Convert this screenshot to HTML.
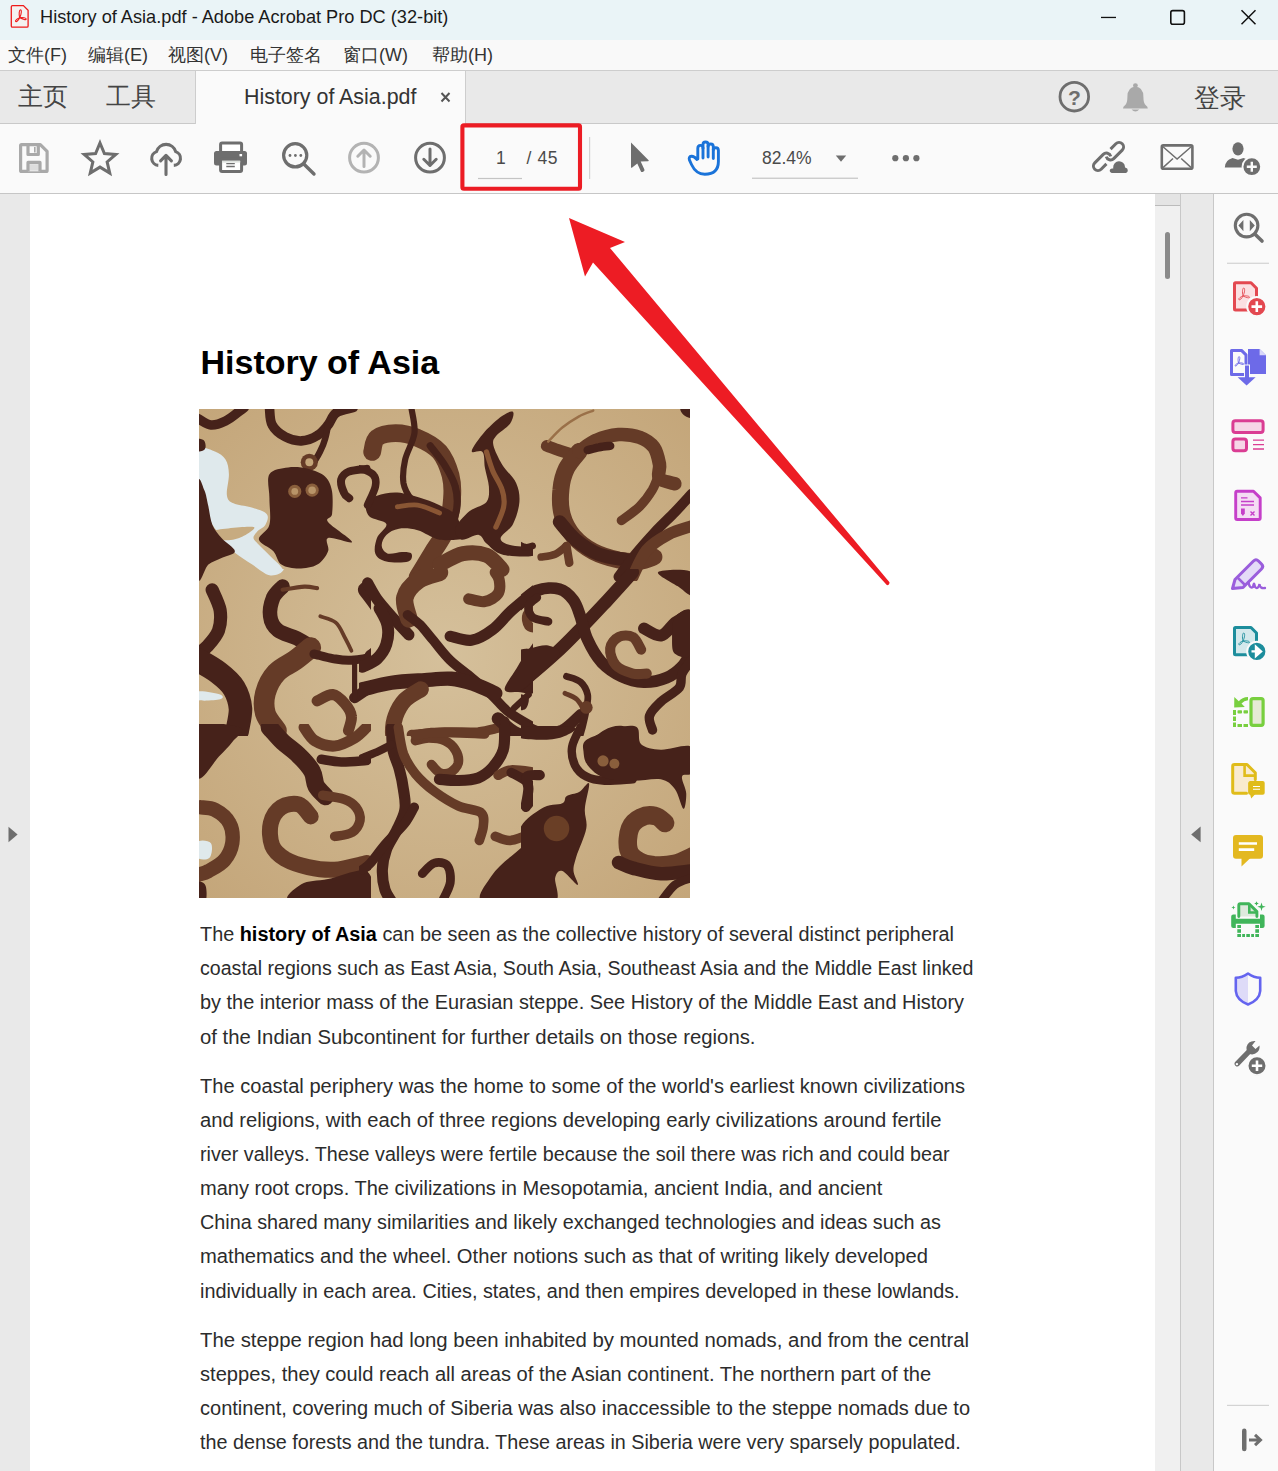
<!DOCTYPE html>
<html><head><meta charset="utf-8">
<style>
*{margin:0;padding:0;box-sizing:border-box}
html,body{width:1278px;height:1471px;overflow:hidden;background:#fff;font-family:"Liberation Sans",sans-serif}
.abs{position:absolute}
#title{left:0;top:0;width:1278px;height:40px;background:#eaf4f7}
#menu{left:0;top:40px;width:1278px;height:31px;background:#f9f9f9;border-bottom:1px solid #cdcdcd}
#tabs{left:0;top:71px;width:1278px;height:53px;background:#e9e9e9;border-bottom:1px solid #c9c9c9}
#tool{left:0;top:124px;width:1278px;height:70px;background:#fafafa;border-bottom:1px solid #c6c6c6}
#doc{left:0;top:194px;width:1278px;height:1277px;background:#e9e9e9}
.t{position:absolute;white-space:nowrap;line-height:1}
.pl{position:absolute;left:200px;white-space:nowrap;line-height:1;font-size:20px;color:#2c2c2c;transform-origin:0 0}
.pl b{font-weight:bold;color:#000}
svg.ov{position:absolute;left:0;top:0}
</style></head><body>
<div id="title" class="abs">
  <div class="t" style="left:40px;top:8.3px;font-size:18.2px;color:#1a1a1a">History of Asia.pdf - Adobe Acrobat Pro DC (32-bit)</div>
</div>
<div id="menu" class="abs">
  <div class="t" style="left:8px;top:5.5px;font-size:18px;color:#333">文件(F)</div>
  <div class="t" style="left:88px;top:5.5px;font-size:18px;color:#333">编辑(E)</div>
  <div class="t" style="left:168px;top:5.5px;font-size:18px;color:#333">视图(V)</div>
  <div class="t" style="left:250px;top:5.5px;font-size:18px;color:#333">电子签名</div>
  <div class="t" style="left:343px;top:5.5px;font-size:18px;color:#333">窗口(W)</div>
  <div class="t" style="left:432px;top:5.5px;font-size:18px;color:#333">帮助(H)</div>
</div>
<div id="tabs" class="abs">
  <div class="t" style="left:18px;top:13px;font-size:25px;color:#444">主页</div>
  <div class="t" style="left:106px;top:13px;font-size:25px;color:#444">工具</div>
  <div class="abs" style="left:195px;top:-1px;width:271px;height:54px;background:#fafafa;border-left:1px solid #cdcdcd;border-right:1px solid #cdcdcd;border-top:1px solid #cdcdcd"></div>
  <div class="t" style="left:244px;top:15.8px;font-size:21.4px;color:#333">History of Asia.pdf</div>
  <div class="t" style="left:1194px;top:14px;font-size:26px;color:#444">登录</div>
</div>
<div id="tool" class="abs">
  <div class="t" style="left:496px;top:26.2px;font-size:17.5px;color:#4a4a4a">1</div>
  <div class="t" style="left:526.5px;top:26.2px;font-size:17.5px;color:#4a4a4a;letter-spacing:0.6px">/ 45</div>
  <div class="t" style="left:762px;top:25.9px;font-size:17.5px;color:#4a4a4a">82.4%</div>
</div>
<div id="doc" class="abs">
  <div class="abs" style="left:30px;top:0;width:1125px;height:1277px;background:#fff"></div>
  <div class="abs" style="left:1155px;top:0;width:26px;height:1277px;background:#f0f0f0;border-right:1px solid #c8c8c8"></div>
  <div class="abs" style="left:1155px;top:0;width:25px;height:12px;background:#e4e4e4;border-bottom:1px solid #bbb"></div>
  <div class="abs" style="left:1165px;top:38px;width:5px;height:47px;background:#8a8a8a;border-radius:3px"></div>
  <div class="abs" style="left:1181px;top:0;width:33px;height:1277px;background:#e9e9e9;border-right:1px solid #c8c8c8"></div>
  <div class="abs" style="left:1214px;top:0;width:64px;height:1277px;background:#fafafa"></div>
</div>
<div class="t" style="left:200.5px;top:344.8px;font-size:34px;font-weight:bold;color:#000">History of Asia</div>

<svg class="abs" style="left:190px;top:400px" width="510" height="510" viewBox="0 0 2556 2556">
<defs><clipPath id="c0"><rect x="15" y="15" width="892" height="892"/></clipPath><clipPath id="c1"><rect x="847" y="15" width="872" height="892"/></clipPath><clipPath id="c2"><rect x="1659" y="15" width="877" height="892"/></clipPath><clipPath id="c3"><rect x="15" y="847" width="892" height="837"/></clipPath><clipPath id="c4"><rect x="847" y="847" width="872" height="837"/></clipPath><clipPath id="c5"><rect x="1659" y="847" width="877" height="837"/></clipPath><clipPath id="c6"><rect x="15" y="1624" width="892" height="902"/></clipPath><clipPath id="c7"><rect x="847" y="1624" width="872" height="902"/></clipPath><clipPath id="c8"><rect x="1659" y="1624" width="877" height="902"/></clipPath><clipPath id="imc"><rect x="45" y="45" width="2461" height="2451"/></clipPath>
<radialGradient id="bgg" cx="0.5" cy="0.5" r="0.7"><stop offset="0" stop-color="#d5c09b"/><stop offset="1" stop-color="#c4a67a"/></radialGradient></defs>
<g clip-path="url(#imc)">
<rect x="45" y="45" width="2461" height="2451" fill="url(#bgg)"/>
<g clip-path="url(#c0)"><path d="M45 252 C58 224 103 251 125 258 C147 266 167 280 178 298 C190 317 194 342 195 372 C196 402 181 454 185 478 C189 503 198 508 218 518 C238 528 277 530 305 538 C333 547 373 557 385 572 C397 586 386 611 378 625 C371 640 348 647 338 658 C328 670 317 681 318 692 C320 703 332 711 345 725 C358 740 378 757 398 778 C418 800 465 835 465 852 C465 868 424 883 398 878 C373 874 341 844 312 825 C283 806 251 784 225 765 C200 746 173 728 158 712 C144 695 147 682 138 665 C130 648 114 634 105 612 C96 590 92 558 85 532 C78 505 72 470 65 452 C58 434 48 458 45 425 C42 392 32 280 45 252Z" fill="#dfe9ec"/><path d="M118 655 C145 645 283 633 312 635 C341 637 306 658 292 668 C277 679 248 693 225 698 C202 703 170 706 152 698 C134 691 92 666 118 655Z" fill="#c7ab80"/><path d="M38 92 C50 97 82 123 105 125 C128 127 155 116 178 105 C202 94 230 70 245 58 C261 47 267 42 272 38" fill="none" stroke="#46221a" stroke-width="48" stroke-linecap="round" stroke-linejoin="round"/><path d="M398 38 C401 53 398 101 412 125 C425 150 454 172 478 185 C503 198 532 206 558 205 C585 204 616 192 638 178 C661 165 676 144 692 125 C707 106 711 80 732 65 C753 51 804 43 818 38" fill="none" stroke="#46221a" stroke-width="48" stroke-linecap="round" stroke-linejoin="round"/><path d="M692 125 C690 136 685 170 678 192 C672 214 661 240 652 258 C643 277 630 297 625 305" fill="none" stroke="#46221a" stroke-width="32" stroke-linecap="round" stroke-linejoin="round"/><circle cx="598" cy="312" r="43" fill="#653b27"/><circle cx="598" cy="312" r="20" fill="#c4a67a"/><path d="M398 372 C414 346 460 343 492 338 C524 334 561 337 592 345 C623 353 658 366 678 385 C698 404 706 427 712 458 C717 490 715 546 712 572 C708 597 675 588 692 612 C708 635 812 698 812 712 C812 725 712 684 692 692 C672 700 701 736 692 758 C683 781 663 811 638 825 C614 840 575 845 545 845 C515 845 480 840 458 825 C437 811 437 780 418 758 C400 737 348 721 345 698 C342 676 390 660 398 625 C407 591 398 534 398 492 C398 450 383 397 398 372Z" fill="#46221a"/><circle cx="525" cy="458" r="33" fill="#8a5f3c"/><circle cx="612" cy="452" r="33" fill="#8a5f3c"/><circle cx="525" cy="458" r="17" fill="#b89468"/><circle cx="612" cy="452" r="19" fill="#b89468"/><path d="M38 425 C44 353 63 434 72 452 C81 470 85 503 92 532 C98 561 101 598 112 625 C123 652 140 670 158 692 C177 714 225 742 225 758 C225 775 181 781 158 792 C136 803 112 810 92 825 C72 841 47 952 38 885 C30 818 33 497 38 425Z" fill="#46221a"/><path d="M38 198 C44 190 66 197 72 205 C78 213 81 237 75 245 C70 253 45 263 38 255 C32 247 33 207 38 198Z" fill="#46221a"/><path d="M885 345 C871 347 820 350 798 358 C777 367 763 381 758 398 C754 416 765 450 772 465 C778 481 794 487 798 492" fill="none" stroke="#46221a" stroke-width="40" stroke-linecap="round" stroke-linejoin="round"/></g>
<g clip-path="url(#c1)"><path d="M913 260 C917 249 917 205 937 190 C957 174 997 166 1031 166 C1065 166 1104 174 1141 190 C1178 205 1223 229 1251 260 C1278 292 1295 339 1306 378 C1316 417 1317 450 1313 496 C1310 541 1299 607 1282 653 C1265 698 1235 731 1212 770 C1188 809 1153 868 1141 888" fill="none" stroke="#653b27" stroke-width="89" stroke-linecap="round" stroke-linejoin="round"/><path d="M1204 229 C1215 245 1253 289 1274 323 C1295 357 1319 396 1329 433 C1340 470 1342 504 1337 543 C1332 582 1304 647 1298 668" fill="none" stroke="#46221a" stroke-width="36" stroke-linecap="round" stroke-linejoin="round"/><path d="M1110 41 C1112 62 1130 123 1125 166 C1120 209 1087 258 1078 300 C1069 341 1065 385 1070 417 C1076 450 1093 476 1110 496 C1127 515 1162 528 1172 535" fill="none" stroke="#46221a" stroke-width="31" stroke-linecap="round" stroke-linejoin="round"/><path d="M882 511 C889 494 911 488 937 480 C963 472 1000 462 1039 464 C1078 467 1134 484 1172 496 C1210 507 1240 522 1266 535 C1293 548 1312 554 1329 574 C1346 594 1359 633 1368 653 C1378 672 1404 684 1384 692 C1364 700 1291 706 1251 700 C1210 693 1175 662 1141 653 C1107 643 1073 641 1047 645 C1021 649 998 662 984 676 C970 690 959 715 961 731 C962 747 975 765 992 770 C1009 775 1043 762 1062 762 C1082 762 1104 762 1110 770 C1115 778 1115 803 1094 809 C1073 816 1011 816 984 809 C957 803 937 790 929 770 C921 751 928 717 937 692 C946 667 991 639 984 621 C978 603 915 600 898 582 C881 564 876 528 882 511Z" fill="#46221a"/><path d="M890 527 C896 511 924 458 929 433 C934 408 933 392 921 378 C910 364 879 351 859 347 C838 343 812 344 796 354 C779 365 763 391 761 409 C758 428 777 455 780 464" fill="none" stroke="#46221a" stroke-width="38" stroke-linecap="round" stroke-linejoin="round"/><path d="M1412 256 C1413 239 1453 188 1478 158 C1504 129 1541 96 1564 80 C1588 64 1613 54 1619 60 C1626 67 1618 99 1604 119 C1589 139 1547 164 1533 182 C1519 200 1516 205 1521 229 C1527 253 1546 292 1564 323 C1583 354 1621 386 1635 417 C1649 449 1653 477 1651 511 C1648 545 1635 591 1619 621 C1604 651 1559 674 1557 692 C1554 709 1578 719 1604 727 C1630 736 1695 734 1713 743 C1732 752 1738 777 1713 782 C1689 787 1602 785 1564 774 C1527 764 1506 736 1486 719 C1466 703 1468 679 1447 676 C1426 673 1380 705 1361 700 C1341 694 1323 668 1329 645 C1336 621 1374 581 1400 558 C1426 536 1470 532 1486 511 C1502 490 1499 462 1498 433 C1496 404 1483 368 1478 339 C1473 310 1478 274 1466 260 C1455 247 1410 273 1412 256Z" fill="#46221a"/><path d="M1486 260 C1491 276 1504 323 1517 354 C1530 386 1555 419 1564 449 C1574 479 1578 504 1572 535 C1567 566 1540 620 1533 637" fill="none" stroke="#8a5634" stroke-width="26" stroke-linecap="round" stroke-linejoin="round"/><path d="M1039 535 C1056 534 1106 522 1141 527 C1176 532 1232 560 1251 566" fill="none" stroke="#8a5634" stroke-width="24" stroke-linecap="round" stroke-linejoin="round"/><path d="M686 127 C696 120 729 101 749 88 C768 75 794 55 804 49" fill="none" stroke="#46221a" stroke-width="52" stroke-linecap="round" stroke-linejoin="round"/><path d="M686 394 C694 354 723 398 733 417 C744 437 749 483 749 511 C749 540 724 557 733 590 C742 622 811 697 804 707 C796 718 706 705 686 653 C666 600 678 433 686 394Z" fill="#46221a"/><path d="M1251 825 C1270 816 1329 778 1368 770 C1408 762 1453 765 1486 778 C1519 791 1551 837 1564 849" fill="none" stroke="#653b27" stroke-width="75" stroke-linecap="round" stroke-linejoin="round"/></g>
<g clip-path="url(#c2)"><path d="M1788 230 C1801 234 1841 250 1866 258 C1890 266 1925 276 1936 279" fill="none" stroke="#653b27" stroke-width="59" stroke-linecap="round" stroke-linejoin="round"/><path d="M1950 258 C1940 272 1902 311 1887 343 C1872 374 1862 410 1859 449 C1855 487 1855 537 1866 576 C1876 614 1896 651 1922 682 C1948 712 1983 739 2021 759 C2059 779 2109 793 2148 802 C2187 810 2225 811 2254 809 C2283 806 2313 791 2325 787" fill="none" stroke="#653b27" stroke-width="85" stroke-linecap="round" stroke-linejoin="round"/><path d="M1852 611 C1866 626 1903 676 1936 703 C1969 730 2007 757 2049 773 C2092 790 2167 797 2190 802" fill="none" stroke="#46221a" stroke-width="68" stroke-linecap="round" stroke-linejoin="round"/><path d="M1950 258 C1965 249 2002 216 2035 202 C2068 187 2112 176 2148 173 C2185 171 2225 177 2254 187 C2283 198 2308 214 2325 237 C2341 259 2348 296 2353 322 C2358 347 2340 376 2353 392 C2366 409 2418 416 2430 420" fill="none" stroke="#653b27" stroke-width="68" stroke-linecap="round" stroke-linejoin="round"/><path d="M2353 364 C2347 378 2334 420 2318 449 C2301 477 2280 507 2254 533 C2228 559 2178 592 2162 604" fill="none" stroke="#653b27" stroke-width="47" stroke-linecap="round" stroke-linejoin="round"/><path d="M1993 251 C2002 249 2030 240 2049 237 C2068 233 2096 231 2106 230" fill="none" stroke="#46221a" stroke-width="42" stroke-linecap="round" stroke-linejoin="round"/><path d="M1760 787 C1772 785 1809 783 1830 773 C1852 764 1877 738 1887 731" fill="none" stroke="#653b27" stroke-width="38" stroke-linecap="round" stroke-linejoin="round"/><path d="M1887 731 C1889 745 1899 802 1901 816" fill="none" stroke="#653b27" stroke-width="42" stroke-linecap="round" stroke-linejoin="round"/><path d="M2515 470 C2501 485 2461 530 2430 562 C2400 593 2365 625 2332 660 C2299 696 2263 736 2233 773 C2202 811 2162 867 2148 886" fill="none" stroke="#46221a" stroke-width="51" stroke-linecap="round" stroke-linejoin="round"/><path d="M2515 632 C2495 639 2433 655 2395 675 C2358 695 2319 717 2289 752 C2260 787 2230 864 2219 886" fill="none" stroke="#653b27" stroke-width="59" stroke-linecap="round" stroke-linejoin="round"/><path d="M2459 39 C2466 33 2506 31 2515 39 C2525 47 2522 83 2515 89 C2508 94 2482 83 2473 74 C2463 66 2452 45 2459 39Z" fill="#46221a"/><path d="M1647 724 C1653 726 1670 737 1682 738 C1694 739 1712 732 1717 731" fill="none" stroke="#46221a" stroke-width="34" stroke-linecap="round" stroke-linejoin="round"/><path d="M1795 209 C1807 197 1840 159 1866 138 C1892 117 1925 96 1950 82 C1976 67 2009 58 2021 53" fill="none" stroke="#9a7048" stroke-width="12" stroke-linecap="round" stroke-linejoin="round"/></g>
<g clip-path="url(#c3)"><path d="M111 951 C118 968 145 1019 151 1053 C156 1087 153 1125 143 1155 C132 1185 105 1214 88 1233 C71 1253 49 1266 41 1273" fill="none" stroke="#46221a" stroke-width="66" stroke-linecap="round" stroke-linejoin="round"/><path d="M41 1304 C58 1314 113 1343 143 1367 C173 1390 203 1415 221 1445 C239 1475 250 1512 253 1547 C255 1582 239 1639 237 1657" fill="none" stroke="#46221a" stroke-width="118" stroke-linecap="round" stroke-linejoin="round"/><path d="M464 935 C456 944 428 965 417 990 C407 1015 398 1057 402 1084 C405 1112 419 1137 441 1155 C463 1173 506 1180 535 1194 C564 1208 600 1233 613 1241" fill="none" stroke="#46221a" stroke-width="73" stroke-linecap="round" stroke-linejoin="round"/><path d="M605 1241 C592 1252 556 1283 527 1304 C498 1325 458 1339 433 1367 C408 1394 387 1435 378 1469 C369 1503 369 1539 378 1571 C387 1602 424 1642 433 1657" fill="none" stroke="#653b27" stroke-width="104" stroke-linecap="round" stroke-linejoin="round"/><path d="M621 1273 C637 1276 684 1291 715 1296 C747 1301 774 1307 809 1304 C845 1301 897 1293 927 1280 C957 1267 979 1235 990 1225" fill="none" stroke="#46221a" stroke-width="45" stroke-linecap="round" stroke-linejoin="round"/><path d="M880 951 C890 965 924 1007 943 1037 C961 1067 983 1100 990 1131 C996 1163 995 1199 982 1225 C969 1252 923 1278 911 1288" fill="none" stroke="#46221a" stroke-width="77" stroke-linecap="round" stroke-linejoin="round"/><path d="M637 1508 C650 1503 692 1474 715 1476 C739 1479 762 1505 778 1524 C794 1542 807 1564 809 1586 C812 1608 796 1645 794 1657" fill="none" stroke="#653b27" stroke-width="55" stroke-linecap="round" stroke-linejoin="round"/><path d="M825 1492 C842 1482 892 1444 927 1429 C962 1415 1019 1410 1037 1406" fill="none" stroke="#46221a" stroke-width="55" stroke-linecap="round" stroke-linejoin="round"/><path d="M825 1312 C825 1342 825 1462 825 1492" fill="none" stroke="#46221a" stroke-width="26" stroke-linecap="round" stroke-linejoin="round"/><path d="M464 951 C483 948 545 937 574 935 C603 934 626 942 637 943" fill="none" stroke="#653b27" stroke-width="21" stroke-linecap="round" stroke-linejoin="round"/><path d="M653 1084 C666 1090 710 1097 731 1116 C752 1134 765 1171 778 1194 C791 1218 804 1246 809 1257" fill="none" stroke="#653b27" stroke-width="19" stroke-linecap="round" stroke-linejoin="round"/><path d="M323 786 C336 773 441 774 464 786 C488 798 477 844 464 857 C451 870 409 876 386 865 C362 853 310 799 323 786Z" fill="#dfe9ec"/><path d="M41 1461 C59 1456 132 1470 151 1476 C169 1483 169 1495 151 1500 C132 1505 59 1510 41 1504 C22 1497 22 1465 41 1461Z" fill="#dfe9ec"/><path d="M9 833 C20 831 56 825 72 818 C88 810 98 791 103 786" fill="none" stroke="#46221a" stroke-width="56" stroke-linecap="round" stroke-linejoin="round"/></g>
<g clip-path="url(#c4)"><path d="M890 917 C898 930 917 969 937 997 C957 1025 984 1054 1010 1084 C1037 1114 1083 1162 1097 1177" fill="none" stroke="#46221a" stroke-width="56" stroke-linecap="round" stroke-linejoin="round"/><path d="M950 1044 C957 1058 985 1100 990 1130 C996 1160 993 1196 984 1224 C975 1252 957 1278 937 1297 C917 1316 876 1330 864 1337" fill="none" stroke="#46221a" stroke-width="60" stroke-linecap="round" stroke-linejoin="round"/><path d="M1250 864 C1233 870 1173 883 1144 904 C1115 925 1085 958 1077 990 C1069 1023 1094 1079 1097 1097" fill="none" stroke="#653b27" stroke-width="88" stroke-linecap="round" stroke-linejoin="round"/><path d="M1090 1077 C1102 1086 1135 1108 1157 1130 C1179 1153 1199 1182 1224 1210 C1248 1239 1273 1274 1304 1304 C1335 1334 1376 1362 1410 1390 C1445 1419 1479 1448 1510 1477 C1542 1506 1559 1535 1597 1564 C1635 1593 1714 1636 1737 1650" fill="none" stroke="#46221a" stroke-width="48" stroke-linecap="round" stroke-linejoin="round"/><path d="M1397 997 C1410 999 1453 1015 1477 1010 C1502 1006 1532 988 1544 970 C1556 953 1553 922 1550 904 C1548 886 1534 870 1530 864" fill="none" stroke="#653b27" stroke-width="56" stroke-linecap="round" stroke-linejoin="round"/><path d="M1304 1184 C1322 1187 1375 1209 1410 1204 C1446 1198 1484 1175 1517 1150 C1550 1126 1574 1090 1610 1057 C1647 1024 1716 968 1737 950" fill="none" stroke="#46221a" stroke-width="56" stroke-linecap="round" stroke-linejoin="round"/><path d="M1737 1030 C1729 1038 1697 1060 1690 1077 C1684 1094 1689 1119 1697 1130 C1705 1142 1730 1142 1737 1144" fill="none" stroke="#653b27" stroke-width="48" stroke-linecap="round" stroke-linejoin="round"/><path d="M1577 1450 C1576 1430 1617 1377 1637 1344 C1657 1310 1680 1270 1697 1250 C1714 1230 1730 1190 1737 1224 C1744 1257 1753 1410 1737 1450 C1722 1490 1670 1464 1644 1464 C1617 1464 1578 1470 1577 1450Z" fill="#46221a"/><path d="M864 1450 C888 1445 958 1425 1010 1417 C1063 1409 1127 1407 1177 1404 C1227 1400 1269 1394 1310 1397 C1352 1400 1387 1412 1424 1424 C1460 1436 1513 1463 1530 1470" fill="none" stroke="#46221a" stroke-width="72" stroke-linecap="round" stroke-linejoin="round"/><path d="M1157 1450 C1144 1459 1098 1482 1077 1504 C1056 1526 1040 1557 1030 1584 C1020 1610 1017 1638 1017 1664 C1017 1689 1028 1725 1030 1737" fill="none" stroke="#653b27" stroke-width="80" stroke-linecap="round" stroke-linejoin="round"/><path d="M1110 1677 C1138 1675 1222 1666 1277 1664 C1333 1662 1399 1667 1444 1664 C1488 1660 1527 1647 1544 1644" fill="none" stroke="#653b27" stroke-width="48" stroke-linecap="round" stroke-linejoin="round"/><path d="M1544 1597 C1557 1608 1592 1646 1624 1664 C1656 1682 1718 1697 1737 1704" fill="none" stroke="#46221a" stroke-width="64" stroke-linecap="round" stroke-linejoin="round"/><path d="M1624 1544 C1636 1533 1685 1488 1697 1477" fill="none" stroke="#46221a" stroke-width="32" stroke-linecap="round" stroke-linejoin="round"/><path d="M1577 1610 C1579 1632 1588 1716 1590 1737" fill="none" stroke="#46221a" stroke-width="48" stroke-linecap="round" stroke-linejoin="round"/></g>
<g clip-path="url(#c5)"><path d="M2219 863 C2198 887 2133 959 2092 1004 C2050 1049 2015 1087 1972 1131 C1928 1176 1886 1222 1830 1272 C1775 1323 1672 1408 1640 1435" fill="none" stroke="#46221a" stroke-width="64" stroke-linecap="round" stroke-linejoin="round"/><path d="M1640 1032 C1656 1019 1703 969 1739 955 C1774 941 1821 939 1852 948 C1882 956 1905 981 1922 1004 C1940 1028 1946 1056 1958 1089 C1969 1122 1975 1164 1993 1202 C2010 1239 2035 1284 2063 1315 C2092 1345 2127 1369 2162 1385 C2198 1402 2238 1412 2275 1414 C2313 1415 2356 1405 2388 1392 C2420 1379 2445 1358 2466 1336 C2487 1314 2507 1271 2515 1258" fill="none" stroke="#46221a" stroke-width="59" stroke-linecap="round" stroke-linejoin="round"/><path d="M1795 1110 C1782 1107 1734 1102 1717 1089 C1701 1076 1693 1049 1696 1032 C1700 1016 1732 997 1739 990" fill="none" stroke="#46221a" stroke-width="42" stroke-linecap="round" stroke-linejoin="round"/><path d="M1640 1272 C1652 1237 1685 1251 1710 1244 C1736 1237 1772 1225 1795 1230 C1819 1235 1857 1249 1852 1272 C1846 1296 1795 1341 1760 1371 C1725 1402 1660 1472 1640 1456 C1620 1439 1628 1308 1640 1272Z" fill="#46221a"/><path d="M2275 1145 C2289 1151 2334 1185 2360 1181 C2386 1176 2409 1134 2430 1117 C2452 1101 2478 1088 2487 1082" fill="none" stroke="#46221a" stroke-width="59" stroke-linecap="round" stroke-linejoin="round"/><path d="M2430 1089 C2447 1067 2501 1030 2515 1061 C2529 1091 2529 1237 2515 1272 C2501 1308 2447 1285 2430 1272 C2414 1259 2416 1225 2416 1195 C2416 1164 2414 1111 2430 1089Z" fill="#46221a"/><path d="M2346 863 C2358 851 2487 844 2515 863 C2543 882 2527 964 2515 976 C2503 988 2473 952 2445 934 C2416 915 2334 875 2346 863Z" fill="#46221a"/><path d="M2261 1251 C2254 1241 2238 1198 2219 1188 C2200 1177 2167 1178 2148 1188 C2129 1197 2108 1221 2106 1244 C2103 1268 2115 1308 2134 1329 C2153 1350 2193 1364 2219 1371 C2245 1378 2278 1371 2289 1371" fill="none" stroke="#653b27" stroke-width="51" stroke-linecap="round" stroke-linejoin="round"/><path d="M2515 1301 C2507 1312 2476 1348 2466 1371 C2455 1395 2469 1418 2452 1442 C2434 1465 2385 1489 2360 1512 C2335 1536 2310 1559 2303 1583 C2296 1607 2315 1642 2318 1654" fill="none" stroke="#46221a" stroke-width="47" stroke-linecap="round" stroke-linejoin="round"/><path d="M1887 1385 C1899 1390 1940 1398 1958 1414 C1975 1429 1988 1455 1993 1477 C1998 1499 1987 1536 1986 1548" fill="none" stroke="#46221a" stroke-width="34" stroke-linecap="round" stroke-linejoin="round"/><path d="M1880 1470 C1889 1475 1921 1485 1936 1498 C1952 1511 1966 1539 1972 1548" fill="none" stroke="#653b27" stroke-width="25" stroke-linecap="round" stroke-linejoin="round"/><path d="M1640 1611 C1660 1621 1722 1661 1760 1668 C1797 1675 1833 1669 1866 1654 C1899 1638 1942 1589 1958 1576" fill="none" stroke="#46221a" stroke-width="55" stroke-linecap="round" stroke-linejoin="round"/><path d="M1986 1548 C1982 1563 1973 1608 1965 1639 C1956 1671 1941 1722 1936 1738" fill="none" stroke="#46221a" stroke-width="38" stroke-linecap="round" stroke-linejoin="round"/><circle cx="1986" cy="1541" r="32" fill="#653b27"/><path d="M2007 1738 C1978 1724 2048 1670 2078 1654 C2107 1637 2154 1625 2183 1639 C2213 1654 2283 1722 2254 1738 C2225 1755 2036 1752 2007 1738Z" fill="#46221a"/><path d="M1640 1477 C1649 1468 1689 1479 1696 1491 C1703 1503 1692 1538 1682 1548 C1673 1557 1647 1559 1640 1548 C1633 1536 1630 1487 1640 1477Z" fill="#46221a"/></g>
<g clip-path="url(#c6)"><path d="M12 1641 C47 1598 218 1628 252 1641 C285 1653 230 1690 212 1714 C194 1738 174 1757 145 1787 C116 1817 61 1918 38 1894 C16 1870 -24 1683 12 1641Z" fill="#46221a"/><path d="M398 1641 C410 1653 441 1691 465 1714 C490 1737 521 1756 545 1781 C570 1805 597 1835 612 1861 C626 1886 621 1913 632 1934 C643 1955 671 1978 678 1987" fill="none" stroke="#46221a" stroke-width="88" stroke-linecap="round" stroke-linejoin="round"/><path d="M665 1981 C683 1984 744 1991 772 2001 C800 2011 818 2023 832 2041 C845 2058 855 2086 852 2107 C848 2128 833 2154 812 2167 C791 2181 740 2184 725 2187" fill="none" stroke="#653b27" stroke-width="48" stroke-linecap="round" stroke-linejoin="round"/><path d="M572 1641 C581 1652 600 1692 625 1707 C651 1723 692 1736 725 1734 C758 1732 798 1710 825 1694 C852 1678 875 1650 885 1641" fill="none" stroke="#653b27" stroke-width="56" stroke-linecap="round" stroke-linejoin="round"/><path d="M658 1801 C675 1803 721 1813 758 1814 C796 1815 864 1808 885 1807" fill="none" stroke="#46221a" stroke-width="48" stroke-linecap="round" stroke-linejoin="round"/><path d="M52 2041 C64 2043 101 2041 125 2054 C150 2067 184 2093 198 2121 C213 2148 216 2190 212 2221 C207 2252 192 2284 172 2307 C152 2331 114 2348 92 2361 C70 2373 47 2377 38 2381" fill="none" stroke="#653b27" stroke-width="72" stroke-linecap="round" stroke-linejoin="round"/><path d="M605 2087 C595 2077 570 2035 545 2027 C521 2020 482 2025 458 2041 C435 2056 413 2088 405 2121 C397 2153 400 2204 412 2234 C424 2264 448 2283 478 2301 C508 2318 551 2332 592 2341 C633 2350 676 2357 725 2354 C774 2351 858 2326 885 2321" fill="none" stroke="#653b27" stroke-width="80" stroke-linecap="round" stroke-linejoin="round"/><path d="M505 2514 C451 2500 527 2446 558 2427 C590 2408 637 2412 692 2401 C746 2390 853 2342 885 2361 C917 2380 948 2488 885 2514 C822 2540 560 2528 505 2514Z" fill="#46221a"/><path d="M38 2214 C50 2202 95 2207 105 2221 C115 2234 110 2282 98 2294 C87 2306 48 2307 38 2294 C28 2281 27 2226 38 2214Z" fill="#dfe9ec"/><path d="M38 2421 C45 2407 72 2418 78 2434 C85 2450 85 2501 78 2514 C72 2527 45 2530 38 2514 C32 2498 32 2434 38 2421Z" fill="#46221a"/></g>
<g clip-path="url(#c7)"><path d="M1010 1641 C1012 1660 1010 1718 1017 1754 C1024 1790 1042 1821 1050 1854 C1059 1887 1066 1921 1070 1954 C1075 1987 1083 2021 1077 2054 C1072 2087 1053 2121 1037 2154 C1022 2187 996 2221 984 2254 C972 2287 965 2321 964 2354 C963 2387 969 2427 977 2454 C985 2481 1005 2504 1010 2514" fill="none" stroke="#46221a" stroke-width="56" stroke-linecap="round" stroke-linejoin="round"/><path d="M1044 1641 C1048 1663 1056 1735 1070 1774 C1085 1813 1105 1843 1130 1874 C1156 1905 1188 1934 1224 1961 C1259 1987 1305 2016 1344 2034 C1383 2052 1436 2051 1457 2067 C1478 2084 1472 2111 1470 2134 C1469 2157 1454 2195 1450 2207" fill="none" stroke="#653b27" stroke-width="48" stroke-linecap="round" stroke-linejoin="round"/><path d="M864 1794 C877 1788 919 1772 944 1761 C968 1750 999 1733 1010 1727" fill="none" stroke="#46221a" stroke-width="40" stroke-linecap="round" stroke-linejoin="round"/><path d="M1124 2041 C1116 2054 1100 2091 1077 2121 C1054 2151 1013 2187 984 2221 C955 2254 924 2298 904 2321 C884 2343 870 2348 864 2354" fill="none" stroke="#46221a" stroke-width="48" stroke-linecap="round" stroke-linejoin="round"/><path d="M1210 1827 C1217 1834 1235 1861 1250 1867 C1266 1874 1288 1875 1304 1867 C1319 1860 1339 1840 1344 1821 C1348 1802 1342 1773 1330 1754 C1319 1735 1299 1717 1277 1707 C1255 1697 1222 1694 1197 1694 C1173 1694 1142 1705 1130 1707" fill="none" stroke="#653b27" stroke-width="48" stroke-linecap="round" stroke-linejoin="round"/><path d="M1130 1681 C1144 1678 1180 1670 1210 1667 C1240 1665 1266 1666 1310 1667 C1355 1668 1449 1673 1477 1674" fill="none" stroke="#653b27" stroke-width="48" stroke-linecap="round" stroke-linejoin="round"/><path d="M1577 1641 C1576 1660 1580 1721 1570 1754 C1560 1787 1538 1817 1517 1841 C1496 1864 1473 1883 1444 1894 C1415 1905 1376 1906 1344 1907 C1312 1908 1266 1902 1250 1901" fill="none" stroke="#46221a" stroke-width="56" stroke-linecap="round" stroke-linejoin="round"/><path d="M1737 1867 C1716 1865 1643 1852 1610 1854 C1578 1856 1555 1876 1544 1881" fill="none" stroke="#653b27" stroke-width="48" stroke-linecap="round" stroke-linejoin="round"/><path d="M1610 1867 C1625 1876 1679 1901 1697 1921 C1715 1941 1719 1967 1717 1987 C1715 2007 1689 2032 1684 2041" fill="none" stroke="#46221a" stroke-width="48" stroke-linecap="round" stroke-linejoin="round"/><path d="M1164 2374 C1174 2365 1203 2327 1224 2321 C1245 2314 1277 2317 1290 2334 C1304 2351 1308 2391 1304 2421 C1299 2451 1270 2498 1264 2514" fill="none" stroke="#46221a" stroke-width="44" stroke-linecap="round" stroke-linejoin="round"/><path d="M1464 2514 C1426 2493 1486 2425 1510 2387 C1535 2350 1573 2315 1610 2287 C1648 2260 1716 2183 1737 2221 C1758 2258 1783 2465 1737 2514 C1692 2563 1502 2535 1464 2514Z" fill="#46221a"/><path d="M1530 2187 C1544 2191 1576 2212 1610 2207 C1645 2203 1716 2168 1737 2161" fill="none" stroke="#653b27" stroke-width="48" stroke-linecap="round" stroke-linejoin="round"/></g>
<g clip-path="url(#c8)"><path d="M1640 1640 C1687 1632 1885 1632 1922 1640 C1960 1648 1893 1679 1866 1689 C1839 1700 1797 1703 1760 1703 C1722 1703 1660 1700 1640 1689 C1620 1679 1593 1648 1640 1640Z" fill="#46221a"/><path d="M1958 1640 C1950 1656 1920 1707 1915 1739 C1910 1770 1918 1806 1929 1830 C1941 1855 1961 1874 1986 1887 C2010 1900 2039 1906 2078 1908 C2116 1910 2195 1902 2219 1901" fill="none" stroke="#46221a" stroke-width="42" stroke-linecap="round" stroke-linejoin="round"/><path d="M1979 1710 C1992 1696 2021 1687 2049 1675 C2078 1663 2116 1646 2148 1640 C2180 1634 2221 1626 2240 1640 C2259 1654 2241 1706 2261 1725 C2281 1743 2318 1750 2360 1753 C2402 1755 2489 1720 2515 1739 C2541 1757 2523 1841 2515 1866 C2507 1890 2470 1869 2466 1887 C2461 1905 2486 1945 2487 1972 C2488 1999 2482 2053 2473 2049 C2463 2046 2449 1975 2430 1950 C2412 1926 2395 1908 2360 1901 C2325 1894 2266 1909 2219 1908 C2172 1907 2115 1907 2078 1894 C2040 1881 2010 1853 1993 1830 C1975 1808 1974 1780 1972 1760 C1969 1740 1966 1725 1979 1710Z" fill="#46221a"/><circle cx="2070" cy="1809" r="28" fill="#8a5f3c"/><circle cx="2127" cy="1823" r="25" fill="#8a5f3c"/><path d="M1753 1880 C1742 1881 1699 1875 1689 1887 C1680 1899 1697 1926 1696 1950 C1695 1975 1685 2021 1682 2035" fill="none" stroke="#46221a" stroke-width="51" stroke-linecap="round" stroke-linejoin="round"/><path d="M1640 2183 C1660 2106 1722 2076 1760 2049 C1797 2022 1845 2032 1866 2021 C1887 2010 1873 1995 1887 1986 C1901 1976 1932 1975 1950 1965 C1969 1954 1995 1908 2000 1922 C2005 1936 1981 2012 1979 2049 C1976 2087 1993 2108 1986 2148 C1979 2188 1947 2254 1936 2289 C1926 2325 1921 2336 1922 2360 C1923 2383 1953 2430 1943 2430 C1934 2430 1885 2366 1866 2360 C1847 2354 1836 2369 1830 2395 C1825 2421 1862 2495 1830 2515 C1799 2535 1672 2570 1640 2515 C1608 2460 1620 2261 1640 2183Z" fill="#46221a"/><circle cx="1837" cy="2148" r="64" fill="#6a3f26"/><path d="M2381 2120 C2373 2114 2352 2089 2332 2085 C2312 2080 2282 2081 2261 2092 C2240 2102 2215 2121 2205 2148 C2194 2175 2190 2227 2198 2254 C2205 2281 2226 2298 2247 2310 C2268 2323 2294 2329 2325 2332 C2355 2334 2399 2332 2430 2325 C2462 2318 2501 2295 2515 2289" fill="none" stroke="#653b27" stroke-width="93" stroke-linecap="round" stroke-linejoin="round"/><path d="M2148 2318 C2160 2322 2183 2336 2219 2346 C2254 2355 2310 2372 2360 2374 C2409 2376 2489 2362 2515 2360" fill="none" stroke="#46221a" stroke-width="68" stroke-linecap="round" stroke-linejoin="round"/><path d="M2360 2515 C2372 2501 2405 2450 2430 2430 C2456 2410 2501 2401 2515 2395" fill="none" stroke="#46221a" stroke-width="42" stroke-linecap="round" stroke-linejoin="round"/></g>
</g></svg>
<div class="pl" style="top:923.9px;transform:scaleX(0.9926)">The <b>history of Asia</b> can be seen as the collective history of several distinct peripheral</div>
<div class="pl" style="top:958.1px;transform:scaleX(0.9798)">coastal regions such as East Asia, South Asia, Southeast Asia and the Middle East linked</div>
<div class="pl" style="top:992.4px;transform:scaleX(0.996)">by the interior mass of the Eurasian steppe. See History of the Middle East and History</div>
<div class="pl" style="top:1026.7px;transform:scaleX(1.0155)">of the Indian Subcontinent for further details on those regions.</div>
<div class="pl" style="top:1076.3px;transform:scaleX(1.004)">The coastal periphery was the home to some of the world's earliest known civilizations</div>
<div class="pl" style="top:1110.3px;transform:scaleX(1.0104)">and religions, with each of three regions developing early civilizations around fertile</div>
<div class="pl" style="top:1144.3px;transform:scaleX(0.9863)">river valleys. These valleys were fertile because the soil there was rich and could bear</div>
<div class="pl" style="top:1178.4px;transform:scaleX(1.0017)">many root crops. The civilizations in Mesopotamia, ancient India, and ancient</div>
<div class="pl" style="top:1212.4px;transform:scaleX(0.9889)">China shared many similarities and likely exchanged technologies and ideas such as</div>
<div class="pl" style="top:1246.4px;transform:scaleX(1.009)">mathematics and the wheel. Other notions such as that of writing likely developed</div>
<div class="pl" style="top:1280.5px;transform:scaleX(0.9902)">individually in each area. Cities, states, and then empires developed in these lowlands.</div>
<div class="pl" style="top:1329.9px;transform:scaleX(1.0171)">The steppe region had long been inhabited by mounted nomads, and from the central</div>
<div class="pl" style="top:1363.9px;transform:scaleX(1.0061)">steppes, they could reach all areas of the Asian continent. The northern part of the</div>
<div class="pl" style="top:1397.9px;transform:scaleX(1.0009)">continent, covering much of Siberia was also inaccessible to the steppe nomads due to</div>
<div class="pl" style="top:1431.9px;transform:scaleX(0.9879)">the dense forests and the tundra. These areas in Siberia were very sparsely populated.</div>
<svg class="ov" width="1278" height="1471" viewBox="0 0 1278 1471">
 <!-- title icon -->
 <path d="M12.5 5.6 H23.4 L28.1 10.3 V26 Q28.1 27.2 26.9 27.2 H12.5 Q11.3 27.2 11.3 26 V6.8 Q11.3 5.6 12.5 5.6Z" fill="#f4f2f1" stroke="#ee1b1b" stroke-width="1.3"/>
 <path d="M19.7 17.8 C18.7 13.8 19.2 9.8 20.5 9.8 C21.7 9.8 21.7 13.8 19.7 17.8 C18.2 20.8 16.2 22.3 15.5 21.3 C15.0 20.3 17.7 18.3 19.7 17.8 C22.7 17.3 26.2 17.8 26.2 19.1 C26.2 20.3 22.7 19.3 19.7 17.8Z" fill="none" stroke="#ee1b1b" stroke-width="1.1"/>
 <!-- window controls -->
 <rect x="1101" y="16.8" width="15" height="1.3" fill="#111"/>
 <rect x="1170.8" y="10.6" width="13.6" height="13.6" rx="2" fill="none" stroke="#111" stroke-width="1.6"/>
 <path d="M1241.5 10.3 L1255.5 24.3 M1255.5 10.3 L1241.5 24.3" stroke="#111" stroke-width="1.5"/>
 <!-- tab x -->
 <path d="M441.5 93 L449.5 101.5 M449.5 93 L441.5 101.5" stroke="#555" stroke-width="2"/>
 <!-- help -->
 <circle cx="1074.3" cy="96.7" r="14.3" fill="none" stroke="#6e6e6e" stroke-width="2.8"/>
 <text x="1074.3" y="104.6" font-family="Liberation Sans" font-weight="bold" font-size="21" fill="#6e6e6e" text-anchor="middle">?</text>
 <!-- bell -->
 <circle cx="1135.4" cy="85.6" r="2.4" fill="#a9a9a9"/>
 <path d="M1123 108.5 Q1123 106.5 1125 105.3 Q1127.4 103.4 1127.4 97 Q1127.4 87.2 1135.4 86.6 Q1143.4 87.2 1143.4 97 Q1143.4 103.4 1145.8 105.3 Q1147.8 106.5 1147.8 108.5 Z" fill="#a9a9a9"/>
 <path d="M1131.5 109.5 Q1135.4 113.5 1139.3 109.5Z" fill="#a9a9a9"/>
 <!-- toolbar: save -->
 <g fill="none" stroke="#a9a9a9" stroke-width="3.2" stroke-linejoin="round">
  <path d="M21.6 144.6 H40.3 L47.1 151.4 V170.4 Q47.1 171.4 46.1 171.4 H21.6 Q20.6 171.4 20.6 170.4 V145.6 Q20.6 144.6 21.6 144.6Z"/>
  <path d="M28 144.6 V154.5 H38.3 V144.6"/>
  <path d="M28 171.4 V162.4 H40 V171.4" fill="#e6e6e6"/>
 </g>
 <rect x="34" y="147" width="1.6" height="5.5" fill="#a9a9a9"/>
 <path d="M31 164.5 V170 M33 164.5 V170 M35 164.5 V170 M37 164.5 V170" stroke="#cfcfcf" stroke-width="0.8"/>
 <!-- star -->
 <path d="M100.00 143.00 L104.41 153.53 L115.79 154.47 L107.13 161.92 L109.76 173.03 L100.00 167.10 L90.24 173.03 L92.87 161.92 L84.21 154.47 L95.59 153.53Z" fill="none" stroke="#6e6e6e" stroke-width="3" stroke-linejoin="miter"/>
 <!-- cloud upload -->
 <g fill="none" stroke="#6e6e6e" stroke-width="3.1" stroke-linecap="butt">
  <path d="M158.3 165.4 A7.1 7.1 0 0 1 156.5 151.6 A10 10 0 0 1 175.7 151.6 A7.1 7.1 0 0 1 173.8 165.4"/>
  <path d="M166 174.5 V155.5 M160.6 160.8 L166 155.4 L171.4 160.8" stroke-linejoin="round" stroke-linecap="round"/>
 </g>
 <!-- print -->
 <rect x="220.6" y="143" width="21" height="12" rx="1.5" fill="#fff" stroke="#6e6e6e" stroke-width="3"/>
 <rect x="214" y="151" width="33" height="14.5" rx="2.5" fill="#6e6e6e"/>
 <rect x="239.5" y="154" width="2.6" height="2.3" fill="#fff"/>
 <rect x="220.6" y="159.3" width="21" height="12.3" rx="1.5" fill="#fff" stroke="#6e6e6e" stroke-width="3"/>
 <rect x="222" y="160.8" width="18.2" height="1.8" fill="#dfe3df"/>
 <path d="M226.3 163.6 H234.8 M226.3 166.5 H234.8" stroke="#6e6e6e" stroke-width="1.3"/>
 <!-- zoom -->
 <circle cx="295.2" cy="155.3" r="11.6" fill="none" stroke="#6e6e6e" stroke-width="3.2"/>
 <path d="M303.8 164 L314 174" stroke="#6e6e6e" stroke-width="3.4" stroke-linecap="round"/>
 <circle cx="290" cy="155.5" r="1.4" fill="#6e6e6e"/><circle cx="295.4" cy="155.5" r="1.4" fill="#6e6e6e"/><circle cx="300.8" cy="155.5" r="1.4" fill="#6e6e6e"/>
 <!-- up / down -->
 <circle cx="364" cy="157.7" r="14.4" fill="none" stroke="#b3b3b3" stroke-width="3"/>
 <path d="M364 166.5 V150 M357.8 156.2 L364 150 L370.2 156.2" fill="none" stroke="#b3b3b3" stroke-width="3" stroke-linecap="round" stroke-linejoin="round"/>
 <circle cx="430" cy="157.7" r="14.4" fill="none" stroke="#6e6e6e" stroke-width="3"/>
 <path d="M430 149 V165.5 M423.8 159.3 L430 165.5 L436.2 159.3" fill="none" stroke="#6e6e6e" stroke-width="3" stroke-linecap="round" stroke-linejoin="round"/>
 <!-- page box -->
 <rect x="478" y="177.9" width="44" height="1.2" fill="#c4c4c4"/>
 <rect x="462.4" y="125.4" width="117.6" height="63.4" rx="1.5" fill="none" stroke="#ec1c24" stroke-width="4.1"/>
 <rect x="589" y="137" width="1.2" height="42" fill="#d3d3d3"/>
 <!-- cursor -->
 <path d="M631 142.5 L648.6 160.2 Q649.2 161.2 648 161.3 L640.7 161.4 L644.4 169.4 Q644.8 171 643.5 171.6 L642.6 172 Q641.4 172.4 640.8 171.2 L637.3 163.4 L632.2 167.6 Q631 168.3 631 167 Z" fill="#6e6e6e"/>
 <!-- hand -->
 <g fill="none" stroke="#1a73d9" stroke-width="2.9" stroke-linejoin="round" stroke-linecap="round">
  <path d="M697.8 159 V148.6 Q697.8 145.4 700.4 145.4 Q703 145.4 703 148.3 V144.6 Q703 142 705.5 142 Q708.1 142 708.1 144.6 V146.6 Q708.1 144 710.7 144 Q713.3 144 713.3 146.8 V150 Q713.3 147.7 715.8 147.7 Q718.4 147.7 718.4 150.6 V161.5 Q718.4 174.2 704.8 174.2 Q696 174.2 691.5 164.5 L689.4 159.8 Q688.5 156.7 691.4 156.3 Q694 156 697 159.5"/>
  <path d="M703 148 V158 M708.1 146 V157 M713.3 149.5 V158.5"/>
 </g>
 <!-- zoom dropdown -->
 <path d="M835.8 155.5 H846.2 L841 161.7Z" fill="#6e6e6e"/>
 <rect x="752" y="177.6" width="106" height="1.3" fill="#c8c8c8"/>
 <circle cx="895.3" cy="158.2" r="3.1" fill="#6e6e6e"/><circle cx="905.9" cy="158.2" r="3.1" fill="#6e6e6e"/><circle cx="916.4" cy="158.2" r="3.1" fill="#6e6e6e"/>
 <!-- link cloud -->
 <g fill="none" stroke="#6e6e6e" stroke-width="3">
  <path d="M-1.5 -4.5 H6 A4.5 4.5 0 0 1 6 4.5 H-6 A4.5 4.5 0 0 1 -9.9 -2.2" transform="translate(1114.8 151.2) rotate(-45)"/>
  <path d="M1.5 4.5 H-6 A4.5 4.5 0 0 1 -6 -4.5 H6 A4.5 4.5 0 0 1 9.9 2.2" transform="translate(1102.2 161.8) rotate(-45)"/>
 </g>
 <path d="M1111.6 173.8 A3.1 3.1 0 0 1 1112.3 167.6 A5.8 5.8 0 0 1 1125.9 166.9 A3.6 3.6 0 0 1 1126.3 173.8 Z" fill="#6e6e6e" stroke="#fafafa" stroke-width="1.8"/>
 <!-- mail -->
 <rect x="1161.8" y="145.4" width="30.6" height="23.4" rx="1.5" fill="none" stroke="#6e6e6e" stroke-width="2.6"/>
 <path d="M1163 146.8 L1177.1 159 L1191.2 146.8 M1163 167.6 L1173 158.5 M1191.2 167.6 L1181.2 158.5" fill="none" stroke="#6e6e6e" stroke-width="1.5"/>
 <!-- person add -->
 <ellipse cx="1238" cy="148.8" rx="5.6" ry="6.6" fill="#6e6e6e"/>
 <path d="M1224.8 167.6 Q1224.8 160.2 1232.5 158 L1238 159.8 L1243.5 158 Q1249 159.5 1250 163 L1250 167.6 Z" fill="#6e6e6e"/>
 <circle cx="1251.8" cy="166.7" r="9.3" fill="#6e6e6e" stroke="#fafafa" stroke-width="1.8"/>
 <path d="M1246.8 166.7 H1256.8 M1251.8 161.7 V171.7" stroke="#fafafa" stroke-width="2.4"/>
 <!-- left/right doc triangles -->
 <path d="M8.5 826.7 L17.6 834.5 L8.5 842.3Z" fill="#6e6e6e"/>
 <path d="M1200.6 826.4 L1191.2 834.4 L1200.6 842.3Z" fill="#6e6e6e"/>
 <!-- sidebar -->
 <circle cx="1246.6" cy="225.6" r="11.3" fill="none" stroke="#6e6e6e" stroke-width="3.1"/>
 <path d="M1254.8 234 L1262 241" stroke="#6e6e6e" stroke-width="3.6" stroke-linecap="round"/>
 <path d="M1243.4 220 V231.2 L1238.4 225.6Z M1249.8 220 V231.2 L1254.8 225.6Z" fill="#6e6e6e"/>
 <rect x="1227" y="262.7" width="42" height="1.1" fill="#cfcfcf"/>
 <rect x="1227" y="1404.8" width="42" height="1.1" fill="#cfcfcf"/>
 <!-- red pdf add -->
 <path d="M1235.5 282.8 H1251 L1256.5 288.3 V308.5 Q1256.5 310 1255 310 H1235.5 Q1234.5 310 1234.5 309 V283.8 Q1234.5 282.8 1235.5 282.8Z" fill="#fbe0e2" stroke="#e34850" stroke-width="3" stroke-linejoin="round"/>
 <path d="M1243 296 C1242.0 292.0 1242.5 288.0 1243.8 288.0 C1245.0 288.0 1245.0 292.0 1243 296 C1241.5 299.0 1239.5 300.5 1238.8 299.5 C1238.3 298.5 1241.0 296.5 1243 296 C1246.0 295.5 1249.5 296 1249.5 297.3 C1249.5 298.5 1246.0 297.5 1243 296Z" fill="none" stroke="#e34850" stroke-width="0.9"/>
 <circle cx="1256.8" cy="306.6" r="9.6" fill="#e34850" stroke="#fafafa" stroke-width="2"/>
 <path d="M1251.5 306.6 H1262.1 M1256.8 301.3 V311.9" stroke="#fff" stroke-width="2.6"/>
 <!-- combine -->
 <path d="M1231.5 350.4 H1241.5 L1246 354.9 V374.5 H1231.5 Z" fill="#fafafa" stroke="#6d6ae8" stroke-width="3" stroke-linejoin="round"/>
 <path d="M1238.5 363 C1237.7 359.8 1238.1 356.6 1239.14 356.6 C1240.1 356.6 1240.1 359.8 1238.5 363 C1237.3 365.4 1235.7 366.6 1235.14 365.8 C1234.74 365.0 1236.9 363.4 1238.5 363 C1240.9 362.6 1243.7 363 1243.7 364.04 C1243.7 365.0 1240.9 364.2 1238.5 363Z" fill="none" stroke="#6d6ae8" stroke-width="0.9"/>
 <path d="M1248 348.9 H1259.6 L1266 355.3 V374 H1248 Z" fill="#6d6ae8"/>
 <path d="M1259.6 348.9 V355.3 H1266Z" fill="#d9d8fa"/>
 <rect x="1244.5" y="365" width="5" height="14" fill="#6d6ae8" stroke="#fafafa" stroke-width="1"/>
 <path d="M1237.6 377.3 H1255.6 L1246.6 385.6Z" fill="#6d6ae8"/>
 <!-- forms -->
 <rect x="1232.9" y="420.8" width="30.2" height="11.8" rx="2.5" fill="#f6d6e7" stroke="#da3d93" stroke-width="3"/>
 <rect x="1232.9" y="438.9" width="13.6" height="11.9" rx="2.5" fill="#f6d6e7" stroke="#da3d93" stroke-width="3"/>
 <path d="M1253 440.2 H1264 M1253 444.6 H1264 M1253 449 H1264" stroke="#da3d93" stroke-width="1.3"/>
 <!-- sign doc -->
 <path d="M1237.2 491.2 H1253.5 L1260.2 497.9 V518 Q1260.2 519.5 1258.7 519.5 H1237.2 Q1235.7 519.5 1235.7 518 V492.7 Q1235.7 491.2 1237.2 491.2Z" fill="#f4ddf4" stroke="#c53fc9" stroke-width="2.9" stroke-linejoin="round"/>
 <path d="M1241 497.8 H1247.5 M1241 501.5 H1254 M1241 505 H1254" stroke="#c53fc9" stroke-width="1.3"/>
 <path d="M1241 508.5 H1244.8 V513.5 L1242.9 516 L1241 513.5Z" fill="#c53fc9"/>
 <path d="M1250.5 511.5 L1254.5 515.5 M1254.5 511.5 L1250.5 515.5" stroke="#c53fc9" stroke-width="1.4"/>
 <!-- pen sign -->
 <path d="M1232.5 588.5 L1235 579.5 L1253.5 561 Q1256 558.5 1258.5 561 L1261.5 564 Q1264 566.5 1261.5 569 L1243 587.5 Z" fill="#e4dbf7" stroke="#9a5ddc" stroke-width="3" stroke-linejoin="round"/>
 <path d="M1238 578 L1245 585" stroke="#9a5ddc" stroke-width="2.5"/>
 <path d="M1248.5 582 Q1249.5 589 1253 587 Q1254 580.5 1255 587 Q1258 590 1259.5 584 Q1260 589 1265 588" fill="none" stroke="#9a5ddc" stroke-width="2.3" stroke-linecap="round"/>
 <!-- export pdf -->
 <path d="M1235.5 627.5 H1251 L1256.5 633 V653.3 Q1256.5 654.8 1255 654.8 H1235.5 Q1234.5 654.8 1234.5 653.8 V628.5 Q1234.5 627.5 1235.5 627.5Z" fill="#d4e9ec" stroke="#1c8d9c" stroke-width="3" stroke-linejoin="round"/>
 <path d="M1243 641 C1242.0 637.0 1242.5 633.0 1243.8 633.0 C1245.0 633.0 1245.0 637.0 1243 641 C1241.5 644.0 1239.5 645.5 1238.8 644.5 C1238.3 643.5 1241.0 641.5 1243 641 C1246.0 640.5 1249.5 641 1249.5 642.3 C1249.5 643.5 1246.0 642.5 1243 641Z" fill="none" stroke="#1c8d9c" stroke-width="0.9"/>
 <circle cx="1256.8" cy="651.4" r="9.6" fill="#1c8d9c" stroke="#fafafa" stroke-width="2"/>
 <path d="M1251.5 651.4 H1258 M1256 647 L1261 651.4 L1256 655.8Z" stroke="#fff" stroke-width="2.4" fill="#fff"/>
 <!-- organize -->
 <rect x="1251" y="698.6" width="12.1" height="26.7" rx="2" fill="#e6ead6" stroke="#78cf3f" stroke-width="3.2"/>
 <g fill="#78cf3f">
  <rect x="1233" y="710" width="3" height="5"/><rect x="1233" y="716.5" width="3" height="4.5"/><rect x="1233" y="722.5" width="3" height="4.5"/>
  <rect x="1237.5" y="710.3" width="4.5" height="3.2" rx="0.8"/><rect x="1243.5" y="710.3" width="4.5" height="3.2" rx="0.8"/>
  <rect x="1237.5" y="724" width="4.5" height="3"/><rect x="1243.5" y="724" width="4.5" height="3"/>
  <path d="M1234.3 697 L1234.2 707.5 L1244.8 707 L1241.5 703.5 Q1244 700.5 1248 700.2 V697 Q1242 697.2 1238.8 701.2 Z"/>
 </g>
 <!-- comment doc -->
 <path d="M1233 764.5 H1247 L1255.3 772.8 V781 H1248 V793.2 H1233 Z" fill="#f9ebcf"/>
 <path d="M1255.3 779.5 V772.8 L1247 764.5 H1234.5 Q1232.7 764.5 1232.7 766.3 V791.4 Q1232.7 793.2 1234.5 793.2 H1246.5" fill="none" stroke="#e0bc1a" stroke-width="3" stroke-linecap="round" stroke-linejoin="round"/>
 <path d="M1244.6 765.5 V775.6 H1254.5" fill="none" stroke="#e0bc1a" stroke-width="2.6"/>
 <rect x="1248.1" y="781" width="16.6" height="13.7" rx="2" fill="#e0bc1a"/>
 <path d="M1250 794 L1251.2 798.5 L1255.3 794Z" fill="#e0bc1a"/>
 <path d="M1253 786.5 H1260 M1253 789.3 H1260" stroke="#fff" stroke-width="1.1"/>
 <!-- comment -->
 <rect x="1233" y="835" width="30" height="23.7" rx="3" fill="#e3b820"/>
 <path d="M1241.5 857 V866.6 L1251.5 857Z" fill="#e3b820"/>
 <path d="M1238.8 843.5 H1257 M1238.8 849.6 H1254.2" stroke="#fff" stroke-width="2.7"/>
 <!-- print production -->
 <path d="M1238.8 916.6 V903.7 H1249 L1256.9 911.6 V916.6 Z" fill="#dde9dc"/>
 <path d="M1238.8 916.6 V905.2 Q1238.8 903.7 1240.3 903.7 H1249 L1256.9 911.6 V916.6" fill="none" stroke="#40b55a" stroke-width="2.9" stroke-linejoin="round" stroke-linecap="round"/>
 <path d="M1249.3 904.5 V912.5 H1256.5" fill="none" stroke="#40b55a" stroke-width="2.6"/>
 <path d="M1233.3 914.4 H1235.8 V918.8 H1260 V914.4 H1262.5 Q1264.6 914.4 1264.6 916.5 V925.9 Q1264.6 928 1262.5 928 H1260 V923.8 H1235.8 V928 H1233.3 Q1231.2 928 1231.2 925.9 V916.5 Q1231.2 914.4 1233.3 914.4Z" fill="#40b55a"/>
 <g fill="#40b55a">
  <rect x="1237.3" y="925" width="3.7" height="3"/><rect x="1255.3" y="925" width="3.7" height="3"/>
  <rect x="1237.3" y="929.2" width="3.7" height="3.6"/><rect x="1255.3" y="929.2" width="3.7" height="3.6"/>
  <rect x="1237.3" y="934" width="3.7" height="3"/><rect x="1255.3" y="934" width="3.7" height="3"/>
  <rect x="1242.2" y="934" width="2.8" height="3"/><rect x="1246.3" y="934" width="3.6" height="3"/><rect x="1251.2" y="934" width="2.8" height="3"/>
 </g>
 <path d="M1233.4 905.4 l0.6 1.5 l1.5 0.6 l-1.5 0.6 l-0.6 1.5 l-0.6 -1.5 l-1.5 -0.6 l1.5 -0.6z M1256.5 901.2 l0.7 1.6 l1.6 0.7 l-1.6 0.7 l-0.7 1.6 l-0.7 -1.6 l-1.6 -0.7 l1.6 -0.7z M1261.5 902.6 l1 3.2 l3.2 1 l-3.2 1 l-1 3.2 l-1 -3.2 l-3.2 -1 l3.2 -1z" fill="#40b55a"/>
 <!-- shield -->
 <path d="M1248 973 V1004" stroke="none"/>
 <path d="M1248 973.5 Q1242 977.8 1235.8 977.8 V991 Q1236.5 1000 1248 1004.5 V973.5Z" fill="#dedbf8"/>
 <path d="M1248 973.5 Q1242 977.8 1235.8 977.8 V991 Q1236.5 1000 1248 1004.5 Q1259.5 1000 1260.2 991 V977.8 Q1254 977.8 1248 973.5Z" fill="none" stroke="#6464ef" stroke-width="2.6" stroke-linejoin="round"/>
 <!-- wrench add -->
 <path d="M1237.3 1063.7 L1248.5 1052" stroke="#6e6e6e" stroke-width="5.4" stroke-linecap="round"/>
 <path d="M1255.5 1041 Q1248 1040.5 1246.5 1047 Q1246 1052 1249.5 1054 Q1254 1055.5 1257.5 1052 Q1260 1049.5 1259.5 1045.5 L1255.5 1049 L1252 1045.5 Z" fill="#6e6e6e"/>
 <circle cx="1236.9" cy="1064.1" r="1.2" fill="#fafafa"/>
 <circle cx="1257" cy="1065.8" r="9.4" fill="#6e6e6e" stroke="#fafafa" stroke-width="1.8"/>
 <path d="M1251.8 1065.8 H1262.2 M1257 1060.6 V1071" stroke="#fff" stroke-width="2.6"/>
 <!-- exit -->
 <rect x="1242" y="1428.6" width="4.5" height="22.7" rx="2.25" fill="#6e6e6e"/>
 <path d="M1249 1440 H1259 M1255 1434.8 L1260.5 1440 L1255 1445.2" fill="none" stroke="#6e6e6e" stroke-width="3" stroke-linejoin="miter"/>
 <!-- red arrow -->
 <path d="M569 218 L625 242 L610 248 L889.5 582.2 Q889.5 585 887 585.3 L593 262.5 L585 276.5 Z" fill="#ed1c24"/>
</svg>

</body></html>
